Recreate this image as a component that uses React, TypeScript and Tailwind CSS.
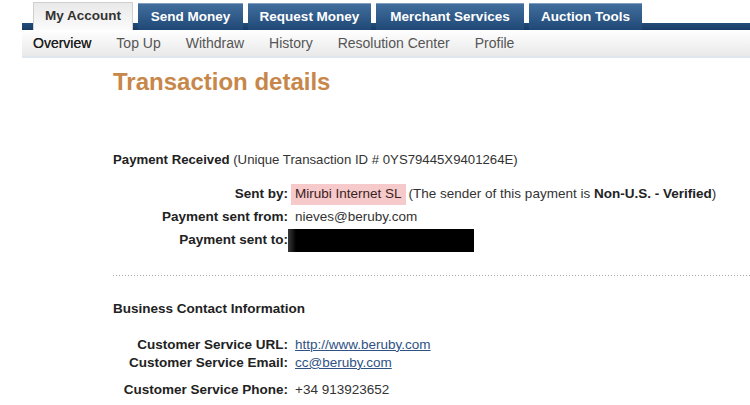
import React from "react"

const tabs = [
    { label: "Send Money", w: "w-[105px]" },
    { label: "Request Money", w: "w-[123px]" },
    { label: "Merchant Services", w: "w-[148px]" },
    { label: "Auction Tools", w: "w-[113px]" },
]

const subNav = ["Top Up", "Withdraw", "History", "Resolution Center", "Profile"]

const Label = ({ children }: { children: React.ReactNode }) => (
    <div className="w-[175px] shrink-0 text-right font-bold text-[#222]">{children}</div>
)

export default function App() {
    return <div className="w-[750px] h-[405px] overflow-hidden bg-white font-['Liberation_Sans',Arial,sans-serif] text-[13.5px] text-[#333]">
        {/* tabs */}
        <div className="ml-[22px] pl-[11px] pt-[2px] h-[30px] flex items-end gap-[5px] bg-[linear-gradient(to_bottom,transparent_23px,#234d7c_23px,#173a63_30px)]">
            <div className="w-[100px] h-[28px] flex items-center justify-center border border-b-0 border-[#cfcfcf] bg-gradient-to-b from-[#e9e9e9] to-[#fbfbfb] font-bold text-[13.5px] text-[#333]">
                My Account
            </div>
            {tabs.map(t => (
                <div key={t.label} className={`${t.w} h-[27px] flex items-center justify-center border-t border-[#7f9ec0] bg-gradient-to-b from-[#416e9d] to-[#1f4876] font-bold text-[13.5px] text-white`}>
                    {t.label}
                </div>
            ))}
        </div>

        {/* sub navigation */}
        <div className="ml-[22px] pl-[11px] h-[28px] flex items-center gap-[25px] bg-gradient-to-b from-[#ffffff] to-[#e9e9e9] border-b-2 border-[#dfe6ee] text-[14px]">
            <span className="text-[#1e1e1e] [text-shadow:0_0_0.4px_#333]">Overview</span>
            {subNav.map(s => <span key={s} className="text-[#555]">{s}</span>)}
        </div>

        <div className="pl-[113px]">
            <div className="pt-[10px] text-[24px] leading-[28px] font-bold text-[#c7874a]">Transaction details</div>

            <div className="mt-[56px] leading-[16px] text-[13.2px]">
                <span className="font-bold text-[#222]">Payment Received</span> (Unique Transaction ID # 0YS79445X9401264E)
            </div>

            <div className="mt-[15px]">
                <div className="h-[23px] flex items-center">
                    <Label>Sent by:</Label>
                    <div className="ml-[3px] flex items-center">
                        <span className="h-[21px] px-[4px] flex items-center bg-[#f6caca] text-[#3a2222]">Mirubi Internet SL</span>
                        <span className="ml-[3px]">(The sender of this payment is <span className="font-bold text-[#222]">Non-U.S. - Verified</span>)</span>
                    </div>
                </div>
                <div className="h-[23px] flex items-center">
                    <Label>Payment sent from:</Label>
                    <span className="ml-[7px]">nieves@beruby.com</span>
                </div>
                <div className="h-[23px] flex items-center">
                    <Label>Payment sent to:</Label>
                    <div className="w-[186px] h-[23px] bg-[linear-gradient(to_right,#3a3a3a,#000_8px,#000)]" />
                </div>
            </div>

            <div className="mt-[23px] h-px bg-[repeating-linear-gradient(to_right,#a8a8a8_0_1px,transparent_1px_3px)]" />

            <div className="mt-[25px] leading-[16px] font-bold text-[#222]">Business Contact Information</div>

            <div className="mt-[19px]">
                <div className="h-[18px] flex items-center">
                    <Label>Customer Service URL:</Label>
                    <a className="ml-[7px] text-[#2f5284] underline">http://www.beruby.com</a>
                </div>
                <div className="h-[18px] flex items-center">
                    <Label>Customer Service Email:</Label>
                    <a className="ml-[7px] text-[#2f5284] underline">cc@beruby.com</a>
                </div>
                <div className="mt-[9px] h-[18px] flex items-center">
                    <Label>Customer Service Phone:</Label>
                    <span className="ml-[7px]">+34 913923652</span>
                </div>
            </div>
        </div>
    </div>
}
